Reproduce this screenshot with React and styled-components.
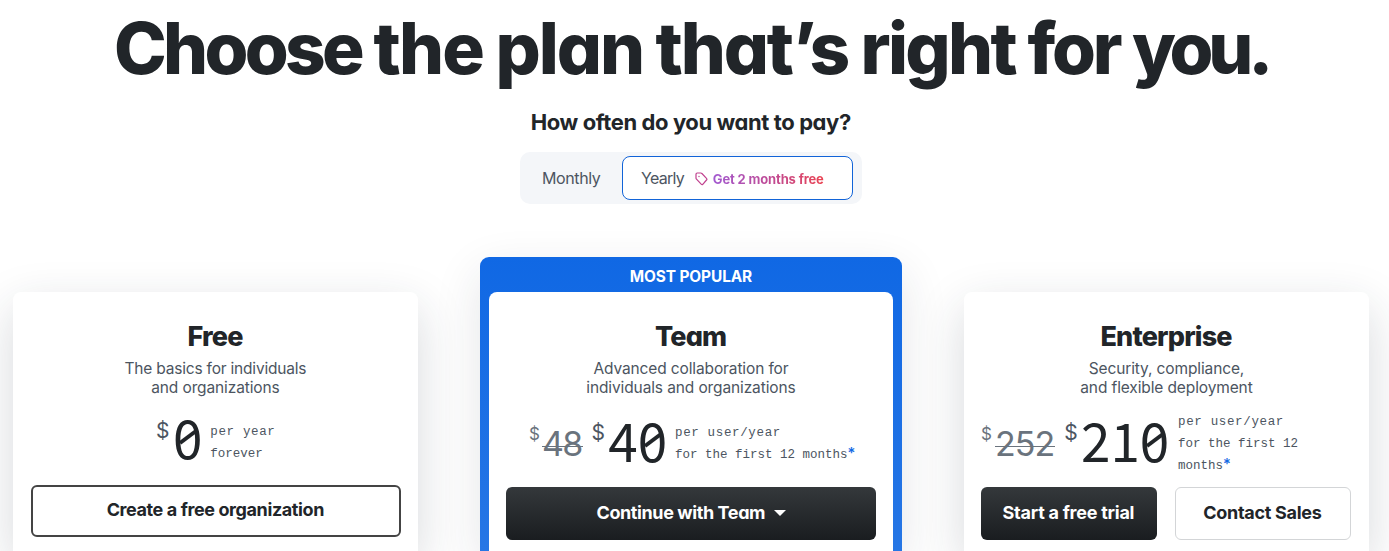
import React from "react";
import styled, { createGlobalStyle, css } from "styled-components";

const Global = createGlobalStyle`
  * { box-sizing: border-box; }
  html, body { margin: 0; height: 551px; overflow: hidden; background: #fff; }
  body { font-family: Inter, "Liberation Sans", sans-serif; color: #212529; -webkit-font-smoothing: antialiased; }
`;

const Page = styled.main`
  width: 1389px;
  height: 551px;
  overflow: hidden;
  display: flex;
  flex-direction: column;
`;

const Fit = styled.span`
  display: inline-block;
  white-space: nowrap;
  letter-spacing: ${(p) => p.$ls || 0}px;
  margin-right: ${(p) => -(p.$ls || 0)}px;
`;

const Hero = styled.header`
  display: flex;
  flex-direction: column;
  align-items: center;
  width: 1382px;
  height: 257px;
  font-feature-settings: "cv11";
`;

const Title = styled.h1`
  margin: 4px 0 0;
  font-size: 71px;
  line-height: 88px;
  font-weight: 800;
  letter-spacing: -2.92px;
  white-space: nowrap;
`;

const Word = styled.span`
  letter-spacing: ${(p) => p.$ls}px;
`;

const Question = styled.h2`
  margin: 16px 0 0;
  font-size: 22px;
  line-height: 28px;
  font-weight: 700;
`;

const Toggle = styled.div`
  display: flex;
  width: 342px;
  height: 52px;
  margin-top: 16px;
  padding: 4px;
  border-radius: 10px;
  background: #f4f6f9;
  font-feature-settings: normal;
`;

const Option = styled.button`
  display: flex;
  align-items: center;
  height: 44px;
  width: ${(p) => p.$w}px;
  padding: 0 0 0 ${(p) => (p.$active ? 18 : 17)}px;
  border: 1px solid ${(p) => (p.$active ? "#1264d8" : "transparent")};
  border-radius: 8px;
  background: ${(p) => (p.$active ? "#fff" : "transparent")};
  color: #4c5561;
  font: 400 16px/20px Inter, sans-serif;
`;

const Offer = styled.span`
  display: flex;
  align-items: center;
  gap: 5px;
  margin: 2px 0 0 10px;
  font-size: 13px;
  font-weight: 700;
  line-height: 18px;
`;

const OfferText = styled.span`
  color: transparent;
  background: linear-gradient(90deg, #a259d0, #c24a91 55%, #ea4452);
  background-clip: text;
`;

const Plans = styled.section`
  display: flex;
  align-items: flex-end;
  height: 294px;
  padding-left: 13px;
`;

const Card = styled.article`
  width: ${(p) => p.$w || 405}px;
  height: 259px;
  padding: 31px 17px 0;
  border-radius: 8px 8px 0 0;
  background: #fff;
  display: flex;
  flex-direction: column;
  align-items: center;
  ${(p) => !p.$flat && css`box-shadow: 0 16px 48px rgba(33, 45, 60, 0.18);`}
`;

const Popular = styled.div`
  width: 422px;
  height: 294px;
  margin: 0 62px;
  padding: 0 9px;
  border-radius: 9px 9px 0 0;
  background: linear-gradient(#1068e4, #2676e5);
  box-shadow: 0 16px 48px rgba(33, 45, 60, 0.12);
`;

const Ribbon = styled.div`
  height: 35px;
  padding-top: 4px;
  text-align: center;
  color: #fff;
  font-size: 15.4px;
  line-height: 31px;
  font-weight: 700;
`;

const PlanName = styled.h3`
  margin: 0;
  font-size: 27px;
  line-height: 28px;
  font-weight: 800;
  font-feature-settings: "cv11";
`;

const Summary = styled.p`
  margin: 8px 0 0;
  font-size: 15.5px;
  line-height: 19px;
  text-align: center;
  color: #4c5561;
`;

const Price = styled.div`
  display: flex;
  align-items: flex-start;
  align-self: flex-start;
  height: 82px;
  margin-left: ${(p) => p.$left}px;
`;

const Currency = styled.span`
  width: ${(p) => p.$w}px;
  margin-top: ${(p) => p.$top}px;
  font-size: ${(p) => (p.$old ? 17 : 21)}px;
  line-height: 24px;
  color: ${(p) => (p.$old ? "#6a737d" : "#4c5561")};
`;

const Amount = styled.span`
  display: flex;
  height: 54px;
  margin-top: ${(p) => p.$top}px;
  margin-right: ${(p) => p.$gap}px;
  font: 400 53px/54px "Noto Sans CJK JP", sans-serif;
`;

const Digit = styled.span`
  width: 29.3px;
  display: flex;
  justify-content: center;
  position: relative;
`;

const Slash = styled.i`
  position: absolute;
  left: 5px;
  top: 26px;
  width: 20px;
  height: 4px;
  background: #212529;
  transform: rotate(-37deg);
`;

const OldAmount = styled.span`
  margin-top: ${(p) => p.$top}px;
  margin-right: ${(p) => p.$gap}px;
  font-size: 34px;
  line-height: 40px;
  color: #6a737d;
  background: linear-gradient(#6a737d, #6a737d) 0 22px / 100% 1px no-repeat;
`;

const Terms = styled.div`
  margin-top: ${(p) => p.$top}px;
  font: 400 12.5px/22px "Liberation Mono", monospace;
  color: #4c5561;
`;

const Star = styled.span`
  color: #1068e4;
  font: 500 15px/10px Inter, sans-serif;
`;

const Actions = styled.div`
  display: flex;
  gap: 18px;
  margin-top: ${(p) => p.$top || 0}px;
  margin-right: ${(p) => p.$shift || 0}px;
`;

const looks = {
  dark: css`color: #fff; background: linear-gradient(#34383b, #1a1d20); border: 0; padding-bottom: 2px;`,
  outline: css`color: #212529; background: #fff; border: 2px solid #444; padding-bottom: 2px;`,
  light: css`color: #212529; background: #fff; border: 1px solid #d3d5d7; padding-bottom: 2px;`,
};

const Button = styled.button`
  display: flex;
  align-items: center;
  justify-content: center;
  gap: 8px;
  flex: none;
  width: ${(p) => p.$w}px;
  height: ${(p) => p.$h || 53}px;
  padding: 0;
  border-radius: 6px;
  font: 700 18px/24px Inter, sans-serif;
  font-feature-settings: ${(p) => (p.$alt ? '"cv11"' : "normal")};
  ${(p) => looks[p.$look]}
`;

const Tag = () => (
  <svg width="13" height="14" viewBox="0 0 13 14" fill="none" stroke="#c0408e" strokeWidth="1.2" strokeLinejoin="round">
    <path d="M1 2.2 Q1 1 2.2 1 H5.8 Q6.4 1 6.9 1.5 L11.5 6.3 Q12.3 7.2 11.5 8 L7.8 12.3 Q7 13 6.2 12.2 L1.5 7.2 Q1 6.7 1 6 Z" />
    <circle cx="4" cy="4.5" r=".7" fill="#c0408e" stroke="none" />
  </svg>
);

const Caret = () => (
  <svg width="12" height="6" viewBox="0 0 12 6"><path d="M0 0H12L6 6Z" fill="#fff" /></svg>
);

const Number = ({ value, top, gap }) => (
  <Amount $top={top} $gap={gap}>
    {value.split("").map((d, i) => (
      <Digit key={i}>{d}{d === "0" && <Slash />}</Digit>
    ))}
  </Amount>
);

const words = [
  ["Choose", -3.7],
  ["the", -1.9],
  ["plan", -2.1],
  ["that’s", -2.2],
  ["right", -2.7],
  ["for", -3.2],
  ["you.", -5.2],
];

export default function App() {
  return (
    <Page>
      <Global />
      <Hero>
        <Title>
          {words.map(([text, ls], i) => (
            <React.Fragment key={text}>{i > 0 && " "}<Word $ls={ls}>{text}</Word></React.Fragment>
          ))}
        </Title>
        <Question><Fit $ls={-0.4}>How often do you want to pay?</Fit></Question>
        <Toggle>
          <Option $w={98}><Fit $ls={-0.4}>Monthly</Fit></Option>
          <Option $w={231} $active>
            <Fit $ls={-0.7}>Yearly</Fit>
            <Offer><Tag /><OfferText><Fit $ls={-0.15}>Get 2 months free</Fit></OfferText></Offer>
          </Option>
        </Toggle>
      </Hero>
      <Plans>
        <Card>
          <PlanName><Fit $ls={-0.8}>Free</Fit></PlanName>
          <Summary><Fit $ls={-0.2}>The basics for individuals</Fit><br /><Fit $ls={-0.12}>and organizations</Fit></Summary>
          <Price $left={126}>
            <Currency $w={17} $top={22}>$</Currency>
            <Number value="0" top={12} gap={8} />
            <Terms $top={24}><Fit $ls={0.65}>per year</Fit><br /><Fit>forever</Fit></Terms>
          </Price>
          <Actions $top={6}>
            <Button $w={370} $h={52} $look="outline"><Fit $ls={-0.4}>Create a free organization</Fit></Button>
          </Actions>
        </Card>
        <Popular>
          <Ribbon><Fit $ls={-0.1}>MOST POPULAR</Fit></Ribbon>
          <Card $w={404} $flat>
            <PlanName><Fit $ls={-0.8}>Team</Fit></PlanName>
            <Summary><Fit $ls={-0.12}>Advanced collaboration for</Fit><br /><Fit $ls={-0.12}>individuals and organizations</Fit></Summary>
            <Price $left={23}>
              <Currency $old $w={13} $top={25}>$</Currency>
              <OldAmount $top={27} $gap={8}><Fit $ls={-1.6}>48</Fit></OldAmount>
              <Currency $w={17} $top={24}>$</Currency>
              <Number value="40" top={15} gap={8} />
              <Terms $top={25}><Fit $ls={0.65}>per user/year</Fit><br /><Fit>for the first 12 months<Star>*</Star></Fit></Terms>
            </Price>
            <Actions $top={8}>
              <Button $w={370} $look="dark" $alt><Fit $ls={-0.4}>Continue with Team</Fit><Caret /></Button>
            </Actions>
          </Card>
        </Popular>
        <Card>
          <PlanName><Fit $ls={-0.8}>Enterprise</Fit></PlanName>
          <Summary><Fit $ls={-0.12}>Security, compliance,</Fit><br /><Fit $ls={-0.12}>and flexible deployment</Fit></Summary>
          <Price $left={0}>
            <Currency $old $w={14} $top={25}>$</Currency>
            <OldAmount $top={27} $gap={9}><Fit $ls={-1}>252</Fit></OldAmount>
            <Currency $w={17} $top={24}>$</Currency>
            <Number value="210" top={15} gap={9} />
            <Terms $top={14}><Fit $ls={0.65}>per user/year</Fit><br /><Fit>for the first 12</Fit><br /><Fit>months<Star>*</Star></Fit></Terms>
          </Price>
          <Actions $top={8} $shift={2}>
            <Button $w={176} $look="dark"><Fit $ls={-0.25}>Start a free trial</Fit></Button>
            <Button $w={176} $look="light"><Fit $ls={-0.3}>Contact Sales</Fit></Button>
          </Actions>
        </Card>
      </Plans>
    </Page>
  );
}
